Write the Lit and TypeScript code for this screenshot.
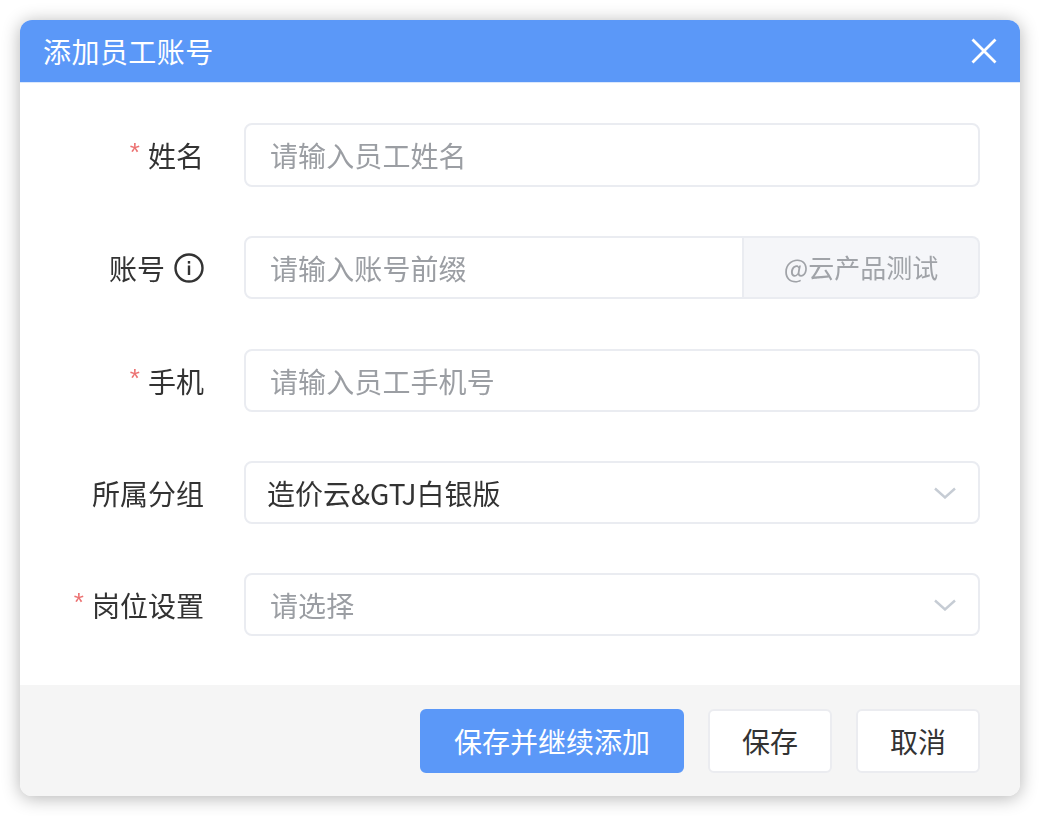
import { LitElement, html, css } from "lit";
import { customElement } from "lit/decorators.js";

const chevron = html`<svg class="chev" width="24" height="12" viewBox="0 0 24 12" fill="none"><path d="M2 1.5 L12 10.5 L22 1.5" stroke="#c6ccd4" stroke-width="2.4"/></svg>`;

@customElement("app-root")
export class AppRoot extends LitElement {
  static styles = css`
    :host { display: block; width: 1040px; height: 816px; background: #fff; box-sizing: border-box; padding: 20px;
      font-family: "Noto Sans CJK SC", "Liberation Sans", sans-serif; }
    .dialog { width: 1000px; height: 776px; border-radius: 12px; overflow: hidden; background: #fff;
      display: flex; flex-direction: column; box-shadow: 0 2px 18px rgba(0,0,0,.3); filter: blur(.55px); }
    .head { height: 62px; flex: none; background: #5b98f8; border-bottom: 1px solid #dbe8fc; display: flex; align-items: center;
      justify-content: space-between; padding: 0 23px 0 23px; color: #fff; font-size: 28px; letter-spacing: .45px; }
    .head svg { display: block; }
    .form { flex: 1; display: grid; grid-template-columns: 184px 736px; column-gap: 40px; row-gap: 49px;
      grid-template-rows: 64px 64px 63px 63px 63px; padding: 40px 40px 0 0; align-content: start; }
    .label { display: flex; align-items: center; justify-content: flex-end; font-size: 28px; color: #333; gap: 8px; }
    .label.tight { padding-bottom: 1px; }
    .req { color: #ec7272; font-family: "Liberation Sans", sans-serif; font-size: 26px; line-height: 1; margin-top: -6px; }
    .info { margin-left: 1px; display: block; }
    .box { box-sizing: border-box; border: 2px solid #eaecf1; border-radius: 8px; display: flex; align-items: center;
      justify-content: space-between; padding: 0 21px 0 24px; font-size: 28px; color: #9b9ea3; height: 100%; background: #fff; letter-spacing: .1px; }
    .box.value { color: #333; padding-left: 21px; letter-spacing: 0; }
    .group { display: flex; height: 63px; }
    .group .box { width: 500px; flex: none; border-radius: 8px 0 0 8px; }
    .addon { box-sizing: border-box; flex: 1; border: 2px solid #eaecf1; border-left: none; border-radius: 0 8px 8px 0; background: #f5f6f9;
      display: flex; align-items: center; justify-content: center; font-size: 26px; color: #a0a3a8; padding-bottom: 2px; }
    .foot { height: 111px; flex: none; box-sizing: border-box; background: #f5f5f5; padding: 24px 40px; display: flex;
      justify-content: flex-end; gap: 24px; }
    .btn { box-sizing: border-box; height: 64px; width: 124px; border: 2px solid #ebecf0; border-radius: 6px; background: #fff;
      color: #333; font: inherit; font-size: 28px; padding: 0; display: flex; align-items: center; justify-content: center; }
    .btn.primary { width: 264px; background: #5b98f8; border-color: #5b98f8; color: #fff; }
  `;

  private row(label: string, req: boolean, extra: unknown, control: unknown, tight = false) {
    return html`<div class="label ${tight ? "tight" : ""}">${req ? html`<span class="req">*</span>` : ""}<span>${label}</span>${extra}</div>${control}`;
  }

  render() {
    const info = html`<svg class="info" width="30" height="30" viewBox="0 0 30 30" fill="none"><circle cx="15" cy="15" r="13.5" stroke="#333" stroke-width="2.4"/><rect x="13.8" y="8" width="2.4" height="2.6" fill="#333"/><rect x="13.8" y="12.5" width="2.4" height="9.5" fill="#333"/></svg>`;
    return html`
      <div class="dialog">
        <div class="head"><span>添加员工账号</span>
          <svg width="26" height="26" viewBox="0 0 26 26" fill="none"><path d="M1.5 1.5 L24.5 24.5 M24.5 1.5 L1.5 24.5" stroke="#fff" stroke-width="2.8"/></svg>
        </div>
        <div class="form">
          ${this.row("姓名", true, "", html`<div class="box">请输入员工姓名</div>`)}
          ${this.row("账号", false, info, html`<div class="group"><div class="box">请输入账号前缀</div><div class="addon">@云产品测试</div></div>`, true)}
          ${this.row("手机", true, "", html`<div class="box">请输入员工手机号</div>`)}
          ${this.row("所属分组", false, "", html`<div class="box value"><span>造价云&amp;GTJ白银版</span>${chevron}</div>`)}
          ${this.row("岗位设置", true, "", html`<div class="box"><span>请选择</span>${chevron}</div>`)}
        </div>
        <div class="foot">
          <button class="btn primary">保存并继续添加</button>
          <button class="btn">保存</button>
          <button class="btn">取消</button>
        </div>
      </div>`;
  }
}
